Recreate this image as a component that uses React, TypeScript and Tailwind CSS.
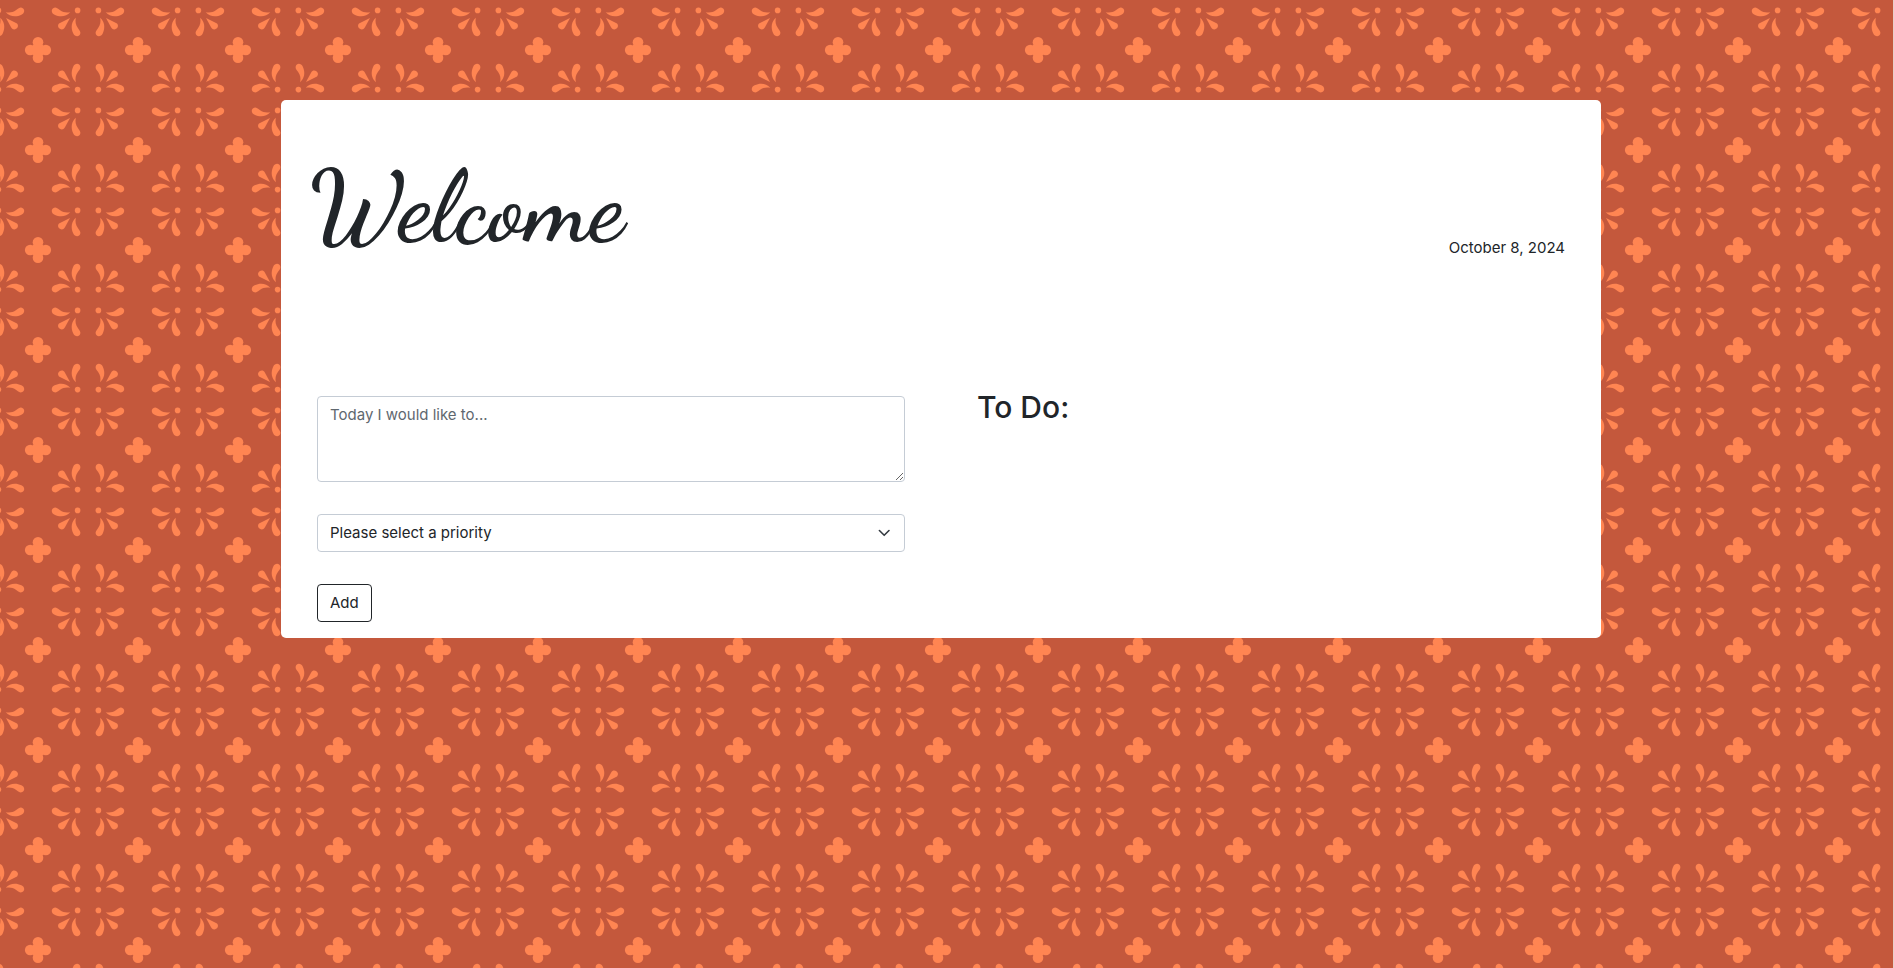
import React from "react";

function Petals() {
  return (
    <g>
      <circle cx="10.4" cy="-10.4" r="2.8" />
      <path d="M12.2 -17.8 C12.9 -22 12.4 -24.8 10 -28.2 C8.2 -30.6 7.3 -32 7.7 -33.6 C8.6 -37.2 13.2 -37 14.7 -33.4 C17.6 -27.5 16.4 -21.5 12.2 -17.8 Z" />
      <path d="M17.8 -12.2 C22 -12.9 24.8 -12.4 28.2 -10 C30.6 -8.2 32 -7.3 33.6 -7.7 C37.2 -8.6 37 -13.2 33.4 -14.7 C27.5 -17.6 21.5 -16.4 17.8 -12.2 Z" />
      <path d="M18 -18 L23.2 -27.6 C25.8 -32.2 32.4 -27.4 29 -23.6 Z" />
    </g>
  );
}

function Backdrop() {
  return (
    <svg className="absolute inset-0 -z-10 h-full w-full" aria-hidden="true">
      <defs>
        <pattern id="tile" x="38" y="50" width="100" height="100" patternUnits="userSpaceOnUse">
          <g fill="#ff8552">
            {[[0, 0], [100, 0], [0, 100], [100, 100]].map(([x, y]) => (
              <g key={`${x}-${y}`} transform={`translate(${x} ${y})`}>
                <circle cx="0" cy="-7.8" r="5.3" />
                <circle cx="0" cy="7.8" r="5.3" />
                <circle cx="-7.8" cy="0" r="5.3" />
                <circle cx="7.8" cy="0" r="5.3" />
                <rect x="-5.2" y="-5.2" width="10.4" height="10.4" />
              </g>
            ))}
            <g transform="translate(50 50)">
              <Petals />
              <g transform="scale(-1 1)"><Petals /></g>
              <g transform="scale(1 -1)"><Petals /></g>
              <g transform="scale(-1 -1)"><Petals /></g>
            </g>
          </g>
        </pattern>
      </defs>
      <rect width="100%" height="100%" fill="url(#tile)" />
    </svg>
  );
}

export default function App() {
  return (
    <div className="relative isolate min-h-screen border-r border-[#e9cfc8] bg-[#c4583c] pt-[100px] pr-[11px] font-['Inter',sans-serif] text-[15px] leading-6 text-[#212529]">
      <Backdrop />
      <main className="mx-auto max-w-[1320px] rounded-[5px] bg-white pb-4">
        <header className="flex h-[296px] items-start justify-between px-9 pt-12">
          <h1 className="-ml-2 font-['Dancing_Script',cursive] text-[99px] leading-[120px] font-semibold">Welcome</h1>
          <p className="pt-[88px]">October 8, 2024</p>
        </header>
        <div className="grid grid-cols-2">
          <form className="flex flex-col items-start gap-8 px-9" onSubmit={(e) => e.preventDefault()}>
            <textarea
              aria-label="Task"
              placeholder="Today I would like to..."
              className="block h-[86px] w-full rounded border border-[#c5ccd5] px-3 py-1.5 placeholder:text-[#5f686f]"
            />
            <div className="relative w-full">
              <select aria-label="Priority" className="block h-[38px] w-full appearance-none rounded border border-[#c5ccd5] bg-white px-3">
                <option>Please select a priority</option>
                <option>High</option>
                <option>Medium</option>
                <option>Low</option>
              </select>
              <svg className="pointer-events-none absolute top-[11px] right-3 h-4 w-4" viewBox="0 0 16 16" fill="none" stroke="#343a40" strokeWidth="2" strokeLinecap="round" strokeLinejoin="round" aria-hidden="true">
                <path d="m2 5 6 6 6-6" transform="translate(.8 1.5) scale(.8)" />
              </svg>
            </div>
            <button className="h-[38px] rounded border border-[#212529] px-3">Add</button>
          </form>
          <section className="px-9">
            <h2 className="-mt-2 text-[30px] leading-[38px] font-medium">To Do:</h2>
          </section>
        </div>
      </main>
    </div>
  );
}
